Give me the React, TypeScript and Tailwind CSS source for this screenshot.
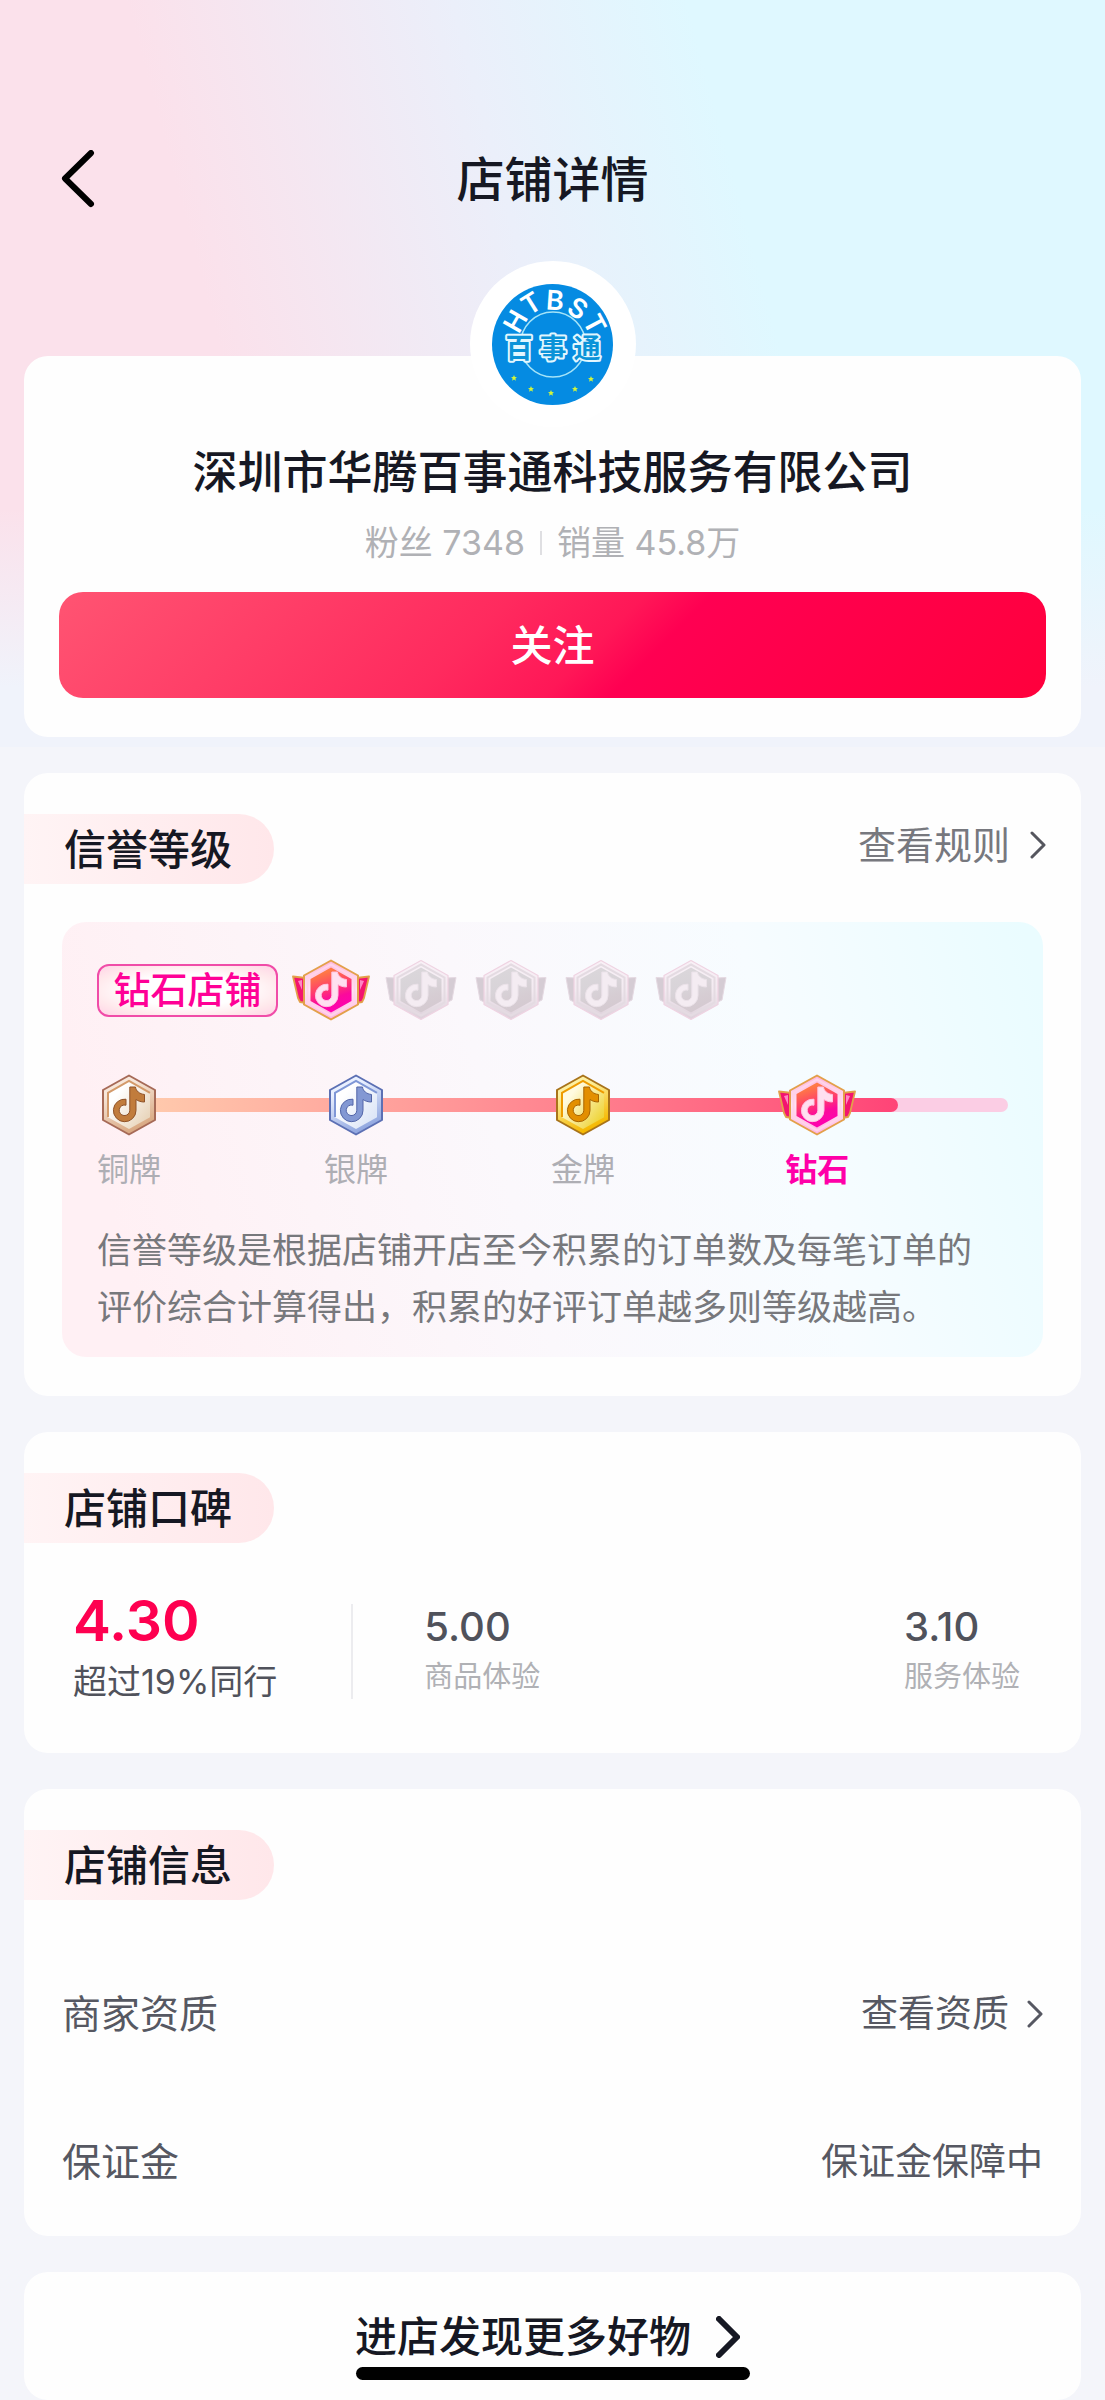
import { useId, type ReactNode } from "react";

const NOTE =
  "M28.3 13H34C34.5 17 38 20 43 20.5V28C39.5 28 36.5 27 34.5 25.5V36.5A11.3 11.3 0 1 1 24.5 25.2V31.2A5.3 5.3 0 1 0 28.3 36.3Z";

const MEDALS = {
  bronze: {
    edge: "#a66a57",
    rim: ["#f7e7da", "#d9a983"],
    bevel: "#d39a6a",
    face: ["#ffffff", "#e9d6bd"],
    note: "#c17c3c",
    noteEdge: "#8f5228",
  },
  silver: {
    edge: "#5c70b4",
    rim: ["#e9f0ff", "#92a8e0"],
    bevel: "#7f97d6",
    face: ["#ffffff", "#dde6f7"],
    note: "#8398d3",
    noteEdge: "#5265a8",
  },
  gold: {
    edge: "#a8731a",
    rim: ["#fdf0a0", "#f5b800"],
    bevel: "#ee9c00",
    face: ["#fffbe0", "#efd53c"],
    note: "#e38f00",
    noteEdge: "#a86400",
  },
};

const levels = [
  { label: "铜牌", medal: "bronze" as const },
  { label: "银牌", medal: "silver" as const },
  { label: "金牌", medal: "gold" as const },
];

const scores = [
  { label: "商品体验", value: "5.00" },
  { label: "服务体验", value: "3.10" },
];

function Medal({ type }: { type: keyof typeof MEDALS }) {
  const id = useId();
  const m = MEDALS[type];
  return (
    <svg className="h-[62px] w-[56px]" viewBox="0 0 55 62" fill="none">
      <defs>
        <linearGradient id={`${id}r`} x1="0" y1="0" x2="0.4" y2="1">
          <stop offset="0.3" stopColor={m.rim[0]} />
          <stop offset="1" stopColor={m.rim[1]} />
        </linearGradient>
        <linearGradient id={`${id}f`} x1="0.1" y1="0.1" x2="0.9" y2="0.8">
          <stop offset="0.2" stopColor={m.face[0]} />
          <stop offset="1" stopColor={m.face[1]} />
        </linearGradient>
      </defs>
      <path
        d="M27.5 1.5L53.5 16V46L27.5 60.5L1.5 46V16Z"
        fill={`url(#${id}r)`}
        stroke={m.edge}
        strokeWidth="2"
        strokeLinejoin="round"
      />
      <path d="M27.5 7L48.5 18.8V43.2L27.5 55L6.5 43.2V18.8Z" fill={`url(#${id}f)`} />
      <path d="M6.5 43V18.8L27.5 7L48.5 18.8" stroke={m.bevel} strokeWidth="2" />
      <path d={NOTE} fill={m.note} stroke={m.noteEdge} strokeWidth="1" />
    </svg>
  );
}

function DiamondMedal({ active = false }: { active?: boolean }) {
  const id = useId();
  const wing = active ? "#f3146f" : "#d5ccd4";
  const edge = active ? "#e3a04a" : "#e5d9e2";
  return (
    <svg className="h-[62px] w-[78px] shrink-0" viewBox="0 0 78 62" fill="none">
      <defs>
        <linearGradient id={`${id}f`} x1="0.3" y1="0" x2="0.6" y2="1">
          <stop offset="0.1" stopColor={active ? "#ff7a45" : "#dad6da"} />
          <stop offset="0.45" stopColor={active ? "#ff3d6c" : "#d8d3d8"} />
          <stop offset="0.7" stopColor={active ? "#fb0a9c" : "#d6cdd3"} />
          <stop offset="1" stopColor={active ? "#ff00b4" : "#d4c9d0"} />
        </linearGradient>
        <linearGradient id={`${id}r`} x1="0" y1="0" x2="0" y2="1">
          <stop offset="0" stopColor={active ? "#ffb6dc" : "#f9f1f7"} />
          <stop offset="0.5" stopColor={active ? "#ffe4f4" : "#f3eaf1"} />
          <stop offset="1" stopColor={active ? "#ffb3e2" : "#ddd0da"} />
        </linearGradient>
      </defs>
      <g fill={wing} stroke={edge} strokeWidth={active ? 1.8 : 1} strokeLinejoin="round">
        <path d={active ? "M1 17.5L14 19V44L8 43L6 39Z" : "M4 18.5L14 19V44L8 41Z"} />
        <path d={active ? "M77 17.5L64 19V44L70 43L72 39Z" : "M74 18.5L64 19V44L70 41Z"} />
      </g>
      {active && (
        <g fill="#ff86c4">
          <path d="M6 22L10 21V31Z" />
          <path d="M72 22L68 21V31Z" />
        </g>
      )}
      <path
        d="M39 1.5L66 16.5V45.5L39 60.5L12 45.5V16.5Z"
        fill={`url(#${id}r)`}
        stroke={active ? "#e3a04a" : "#efd3e2"}
        strokeWidth={active ? 2 : 1.2}
        strokeLinejoin="round"
      />
      <path d="M39 5.5L62.5 18.5V43.5L39 56.5L15.5 43.5V18.5Z" stroke={active ? "#ffd3ea" : "#e4dbe2"} strokeWidth="2" />
      <path d="M39 8.5L59.5 20V42L39 53.5L18.5 42V20Z" fill={`url(#${id}f)`} />
      <path
        d={NOTE}
        transform="translate(11.5 0)"
        fill={active ? "#ffe0f0" : "#f4ecf2"}
        stroke={active ? "#ffc2e2" : "#ebe2e9"}
        strokeWidth="1"
      />
    </svg>
  );
}

function ShopLogo() {
  const letters = [
    { char: "H", x: 23, y: 37, angle: -60 },
    { char: "T", x: 39, y: 19, angle: -32 },
    { char: "B", x: 63, y: 16, angle: 4 },
    { char: "S", x: 86, y: 24, angle: 32 },
    { char: "T", x: 103, y: 40, angle: 62 },
  ];
  const stars = [
    [22, 94],
    [39, 105],
    [59, 109],
    [83, 105],
    [99, 95],
  ];
  return (
    <svg className="size-[121px]" viewBox="0 0 121 121" role="img" aria-label="百事通">
      <circle cx="60.5" cy="60.5" r="60.5" fill="#058be2" />
      <circle cx="61" cy="60.5" r="32.5" fill="none" stroke="#a5e4f8" strokeWidth="1.6" />
      <g fill="#fff" fontFamily="Inter" fontSize="27" fontWeight="600" textAnchor="middle">
        {letters.map((l) => (
          <text key={l.x} transform={`translate(${l.x} ${l.y}) rotate(${l.angle})`} y="10">
            {l.char}
          </text>
        ))}
      </g>
      <g
        fill="#0b93d8"
        stroke="#e2f7ff"
        strokeWidth="4"
        strokeLinejoin="round"
        paintOrder="stroke"
        fontFamily="Noto Sans CJK SC"
        fontSize="27"
        fontWeight="700"
        textAnchor="middle"
      >
        <text x="27" y="74">百</text>
        <text x="61" y="74">事</text>
        <text x="95" y="74">通</text>
      </g>
      {stars.map(([x, y]) => (
        <path
          key={x}
          transform={`translate(${x} ${y})`}
          d="M0-3L0.9-1L3-0.8L1.4 0.6L1.9 2.8L0 1.6L-1.9 2.8L-1.4 0.6L-3-0.8L-0.9-1Z"
          fill="#d2f53c"
        />
      ))}
    </svg>
  );
}

function Chevron({ className, weight }: { className: string; weight: number }) {
  return (
    <svg className={className} viewBox="0 0 16 28" fill="none" stroke="currentColor" strokeWidth={weight}>
      <path d="M2 2L14 14L2 26" strokeLinecap="round" strokeLinejoin="round" />
    </svg>
  );
}

function SectionTitle({ children }: { children: ReactNode }) {
  return (
    <h2 className="flex h-[70px] w-[250px] items-center rounded-r-full bg-linear-to-r from-[#fff4f5] to-[#ffe7ea] pl-10 text-[42px] font-medium text-[#161823]">
      {children}
    </h2>
  );
}

function Card({ children }: { children: ReactNode }) {
  return <section className="rounded-3xl bg-[#fefefe] pt-[41px]">{children}</section>;
}

export default function App() {
  return (
    <div className="relative min-h-screen bg-[#f4f5fa] font-['Inter','Noto_Sans_CJK_SC',sans-serif] text-[#161823]" lang="zh-CN">
      <div className="absolute inset-x-0 top-0 h-[747px] bg-[linear-gradient(to_bottom,transparent_68%,#f0f3fb_92%),linear-gradient(75deg,#fbe1eb_25%,#ebeffa_50%,#dff8ff_68%)]" />

      <div className="relative">
        <header className="grid grid-cols-[1fr_auto_1fr] items-center px-[60px] pt-[140px]">
          <button type="button" aria-label="返回" className="justify-self-start">
            <svg className="h-[60px] w-[36px]" viewBox="0 0 36 60" fill="none" stroke="#000" strokeWidth="6">
              <path d="M31 3L5 28.5L31 54" strokeLinecap="round" strokeLinejoin="round" />
            </svg>
          </button>
          <h1 className="text-[48px] leading-[80px] font-medium">店铺详情</h1>
        </header>

        <main className="flex flex-col gap-9 px-6 pt-[136px]">
          <section className="flex flex-col items-center rounded-3xl bg-[#fefefe] px-[35px] pb-[39px]">
            <div className="-mt-[95px] flex size-[166px] items-center justify-center rounded-full bg-white">
              <ShopLogo />
            </div>
            <h2 className="mt-4 text-[45px] leading-[60px] font-medium">深圳市华腾百事通科技服务有限公司</h2>
            <div className="mt-4 flex items-center gap-[15px] text-[34px] leading-[48px] text-[#b0b1b5]">
              <span>粉丝 7348</span>
              <span className="h-6 w-0.5 bg-[#dfdfe2]" />
              <span>销量 45.8万</span>
            </div>
            <button
              type="button"
              className="mt-[25px] h-[106px] w-full rounded-3xl bg-[linear-gradient(135deg,#ff5472,#ff2a5e_42%,#ff1757_54%,#ff0052_60%,#ff003c)] text-[42px] font-medium text-white"
            >
              关注
            </button>
          </section>

          <Card>
            <div className="flex items-start justify-between pr-[35px]">
              <SectionTitle>信誉等级</SectionTitle>
              <a href="#" className="flex items-center gap-5 text-[38px] leading-[62px] text-[#77787e]">
                查看规则
                <Chevron className="h-7 w-4 text-[#55565e]" weight={3} />
              </a>
            </div>

            <div className="mx-[38px] mt-[38px] rounded-3xl bg-[linear-gradient(75deg,#fff0f4_8%,#fbf8fc_45%,#f7fcff_72%,#eafcff_98%)] px-[35px] pt-[37px] pb-[21px]">
              <div className="flex items-center gap-3">
                <span className="mr-0.5 flex h-[53px] w-[181px] items-center justify-center rounded-xl border-2 border-[#f04ca8] bg-[radial-gradient(ellipse_at_center,#fff_45%,#ffe9ec_75%,#ffd3e6)] text-[37px] leading-none font-medium text-[#ff0096]">
                  钻石店铺
                </span>
                <DiamondMedal active />
                <DiamondMedal />
                <DiamondMedal />
                <DiamondMedal />
                <DiamondMedal />
              </div>

              <div className="relative mt-[53px]">
                <div className="absolute top-6 right-0 left-8 h-3.5 rounded-full bg-[#fbcde4]">
                  <div className="h-full w-7/8 rounded-full bg-linear-to-r from-[#ffcdae] via-[#ff8b93] to-[#ff4377]" />
                </div>
                <div className="relative flex w-5/6 justify-between">
                  {levels.map((level) => (
                    <div key={level.label} className="flex w-16 flex-col items-center gap-2.5">
                      <Medal type={level.medal} />
                      <span className="text-[32px] leading-[48px] text-[#aeaeb4]">{level.label}</span>
                    </div>
                  ))}
                  <div className="flex flex-col items-center gap-2.5">
                    <DiamondMedal active />
                    <span className="text-[32px] leading-[48px] font-bold text-[#ff00a8]">钻石</span>
                  </div>
                </div>
              </div>

              <p className="mt-7 pr-4 text-[35px] leading-[57px] text-[#77787c]">
                信誉等级是根据店铺开店至今积累的订单数及每笔订单的评价综合计算得出，积累的好评订单越多则等级越高。
              </p>
            </div>
            <div className="h-[39px]" />
          </Card>

          <Card>
            <SectionTitle>店铺口碑</SectionTitle>
            <div className="flex items-center pt-[42px] pr-[61px] pb-[36px] pl-[49px]">
              <div className="pr-[74px] pb-2.5">
                <div className="text-[57px] leading-[72px] font-semibold text-[#fe0050]">4.30</div>
                <div className="text-[34px] leading-[50px] text-[#50525b]">超过19%同行</div>
              </div>
              <div className="h-[95px] w-0.5 bg-[#ececef]" />
              <div className="flex flex-1 justify-between pl-[71px]">
                {scores.map((score) => (
                  <div key={score.label} className="flex flex-col gap-0.5 pt-0.5">
                    <span className="text-[40px] leading-[48px] font-medium text-[#50525b]">{score.value}</span>
                    <span className="text-[29px] leading-[48px] text-[#b0b1b5]">{score.label}</span>
                  </div>
                ))}
              </div>
            </div>
          </Card>

          <Card>
            <SectionTitle>店铺信息</SectionTitle>
            <dl className="px-[38px] pt-10 text-[#565862]">
              <div className="flex h-[148px] items-center justify-between">
                <dt className="text-[39px]">商家资质</dt>
                <dd>
                  <a href="#" className="flex items-center gap-[18px] text-[37px]">
                    查看资质
                    <Chevron className="h-7 w-4" weight={3} />
                  </a>
                </dd>
              </div>
              <div className="flex h-[148px] items-center justify-between">
                <dt className="text-[39px]">保证金</dt>
                <dd className="text-[37px]">保证金保障中</dd>
              </div>
            </dl>
          </Card>

          <section className="flex flex-col items-center rounded-3xl bg-[#fefefe] pt-[35px] pb-5">
            <a href="#" className="flex items-center gap-[25px] pr-2.5 text-[42px] leading-[60px] font-medium">
              进店发现更多好物
              <Chevron className="h-[42px] w-6" weight={4} />
            </a>
            <div className="h-[13px] w-[394px] rounded-full bg-black" />
          </section>
        </main>
      </div>
    </div>
  );
}
